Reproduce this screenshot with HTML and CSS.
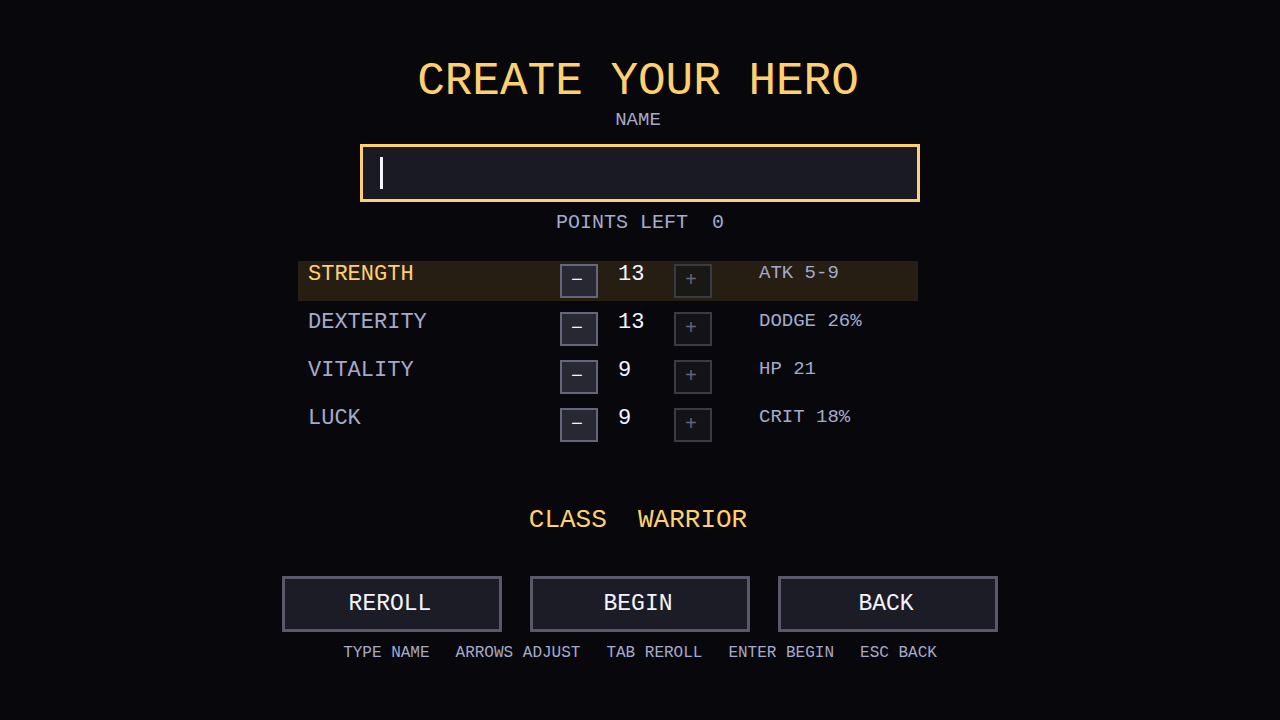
FILE: index.html
```html
<!DOCTYPE html>
<html lang="en">
<head>
    <meta charset="UTF-8">
    <meta name="viewport" content="width=device-width, initial-scale=1.0">
    <title>Create Your Hero</title>
    <link rel="stylesheet" href="styles.css">
</head>
<body>
    <main class="screen">
        <h1 class="title">CREATE YOUR HERO</h1>

        <label class="name-label" for="hero-name">NAME</label>
        <div class="name-box">
            <input class="name-input" type="text" id="hero-name" maxlength="16" autocomplete="off">
            <span class="caret"></span>
        </div>

        <p class="points">POINTS LEFT  0</p>

        <div class="stats">
            <div class="stat selected">
                <span class="stat-name">STRENGTH</span>
                <button class="step" type="button" aria-label="Decrease strength">−</button>
                <span class="stat-value">13</span>
                <button class="step" type="button" aria-label="Increase strength" disabled>+</button>
                <span class="stat-info">ATK 5-9</span>
            </div>
            <div class="stat">
                <span class="stat-name">DEXTERITY</span>
                <button class="step" type="button" aria-label="Decrease dexterity">−</button>
                <span class="stat-value">13</span>
                <button class="step" type="button" aria-label="Increase dexterity" disabled>+</button>
                <span class="stat-info">DODGE 26%</span>
            </div>
            <div class="stat">
                <span class="stat-name">VITALITY</span>
                <button class="step" type="button" aria-label="Decrease vitality">−</button>
                <span class="stat-value">9</span>
                <button class="step" type="button" aria-label="Increase vitality" disabled>+</button>
                <span class="stat-info">HP 21</span>
            </div>
            <div class="stat">
                <span class="stat-name">LUCK</span>
                <button class="step" type="button" aria-label="Decrease luck">−</button>
                <span class="stat-value">9</span>
                <button class="step" type="button" aria-label="Increase luck" disabled>+</button>
                <span class="stat-info">CRIT 18%</span>
            </div>
        </div>

        <p class="hero-class">CLASS  WARRIOR</p>

        <div class="actions">
            <button class="btn" type="button">REROLL</button>
            <button class="btn" type="button">BEGIN</button>
            <button class="btn" type="button">BACK</button>
        </div>

        <div class="hints">
            <span>TYPE NAME</span>
            <span>ARROWS ADJUST</span>
            <span>TAB REROLL</span>
            <span>ENTER BEGIN</span>
            <span>ESC BACK</span>
        </div>
    </main>
</body>
</html>
```
FILE: styles.css
```css
* {
    box-sizing: border-box;
}
body {
    margin: 0;
    min-height: 100vh;
    background: #08080c;
    color: #a6aaca;
    font-family: "Liberation Mono", monospace;
}
button,
input {
    font-family: inherit;
}
.screen {
    display: flex;
    flex-direction: column;
    align-items: center;
    max-width: 716px;
    margin: 0 auto;
    padding: 58px 0;
}
.title,
.name-label,
.hero-class {
    padding-right: 4px;
}
.title {
    margin: 0;
    font-size: 46px;
    font-weight: normal;
    line-height: 48px;
    color: #ffd070;
}
.name-label {
    margin-top: 4px;
    font-size: 19px;
    line-height: 20px;
}
.name-box {
    position: relative;
    width: 100%;
    max-width: 560px;
    margin-top: 14px;
}
.name-input {
    display: block;
    width: 100%;
    height: 58px;
    padding: 0 17px;
    background: #1a1a24;
    border: 3px solid #ffd070;
    border-radius: 0;
    outline: none;
    color: #f5f5ff;
    caret-color: transparent;
    font-size: 30px;
}
/* block cursor drawn over the empty field */
.caret {
    position: absolute;
    top: 13px;
    left: 20px;
    width: 3px;
    height: 32px;
    background: #f5f5ff;
}
.points {
    margin: 9px 0 0;
    font-size: 20px;
    line-height: 24px;
    white-space: pre;
}
.stats {
    display: grid;
    gap: 8px;
    width: 100%;
    margin-top: 26px;
    padding: 0 80px 0 16px;
}
.stat {
    display: grid;
    grid-template-columns: 1fr 58px 56px 85px 159px;
    align-items: start;
    height: 40px;
    padding-left: 10px;
}
.stat.selected {
    background: #261e13;
}
.stat.selected .stat-name {
    color: #ffd070;
}
.stat-name,
.stat-value {
    font-size: 22px;
    line-height: 28px;
}
.stat-value {
    color: #f5f5ff;
}
.stat-info {
    font-size: 19px;
    line-height: 24px;
}
.step {
    width: 38px;
    height: 34px;
    margin-top: 3px;
    padding: 0 4px 0 0;
    background: #282832;
    border: 2px solid #66667a;
    color: #f5f5ff;
    font-size: 20px;
    line-height: 24px;
    cursor: pointer;
}
.step:disabled {
    background: #121217;
    border-color: #3b3b46;
    color: #66667a;
    cursor: default;
}
.stat.selected .step:disabled {
    background: #1a1815;
}
.hero-class {
    margin: 60px 0 0;
    font-size: 26px;
    line-height: 30px;
    color: #ffd070;
    white-space: pre;
}
.actions {
    display: grid;
    grid-template-columns: repeat(3, 1fr);
    gap: 28px;
    width: 100%;
    margin-top: 41px;
}
.btn {
    height: 56px;
    padding: 0 4px 0 0;
    background: #1c1c26;
    border: 3px solid #5a586a;
    color: #f5f5ff;
    font-size: 23px;
    cursor: pointer;
}
.hints {
    display: flex;
    flex-wrap: wrap;
    justify-content: center;
    gap: 26px;
    margin-top: 11px;
    font-size: 16px;
    line-height: 20px;
}
```
